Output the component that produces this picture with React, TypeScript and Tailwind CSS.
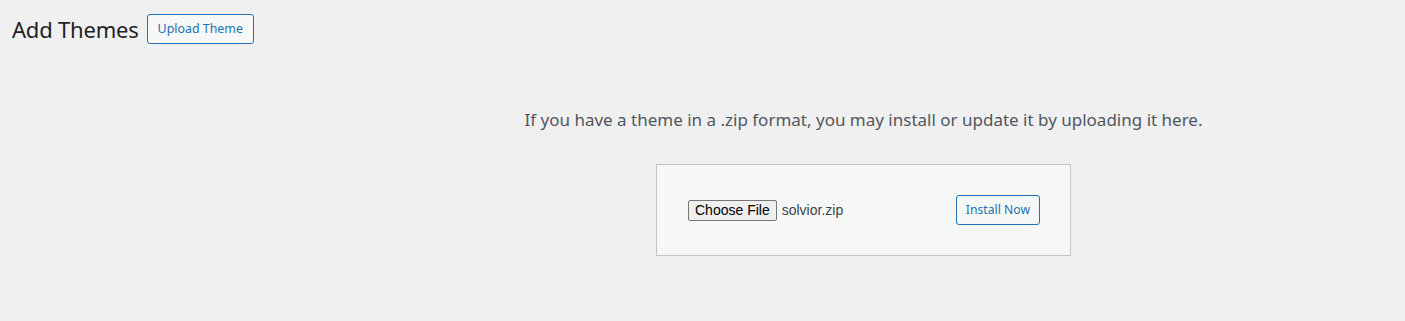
export default function App() {
  return (
    <div className="min-h-[321px] w-full bg-[#f0f0f1] font-['Noto_Sans',sans-serif] text-[#3c434a]">
      <div className="flex items-center pl-[12px] pt-[14px]">
        <h1 className="mr-[8px] text-[22px] font-normal leading-[30px] tracking-[-0.2px] text-[#1d2327]">Add Themes</h1>
        <button className="h-[30px] rounded-[3px] border border-[#2271b1] bg-[#f6f7f7] px-[10px] text-[12.4px] leading-[28px] text-[#2271b1]">
          Upload Theme
        </button>
      </div>

      <div className="flex flex-col items-center pl-[322px]">
        <p className="mt-[64px] text-[17px] leading-[24px] text-[#50575e]">
          If you have a theme in a .zip format, you may install or update it by uploading it here.
        </p>
        <div className="mt-[32px] flex h-[92px] w-[415px] items-center justify-between border border-[#c3c4c7] bg-[#f6f7f7] pl-[31px] pr-[30px]">
          <div className="flex items-center">
            <button className="h-[21px] rounded-[2px] border border-[#767676] bg-[#efefef] px-[6px] font-['Liberation_Sans',sans-serif] text-[14px] leading-[19px] text-black">
              Choose File
            </button>
            <span className="ml-[5px] font-['Liberation_Sans',sans-serif] text-[14px] text-[#3c434a]">solvior.zip</span>
          </div>
          <button className="h-[30px] rounded-[3px] border border-[#2271b1] bg-[#f6f7f7] px-[9px] text-[12.2px] leading-[28px] text-[#2271b1]">
            Install Now
          </button>
        </div>
      </div>
    </div>
  );
}
